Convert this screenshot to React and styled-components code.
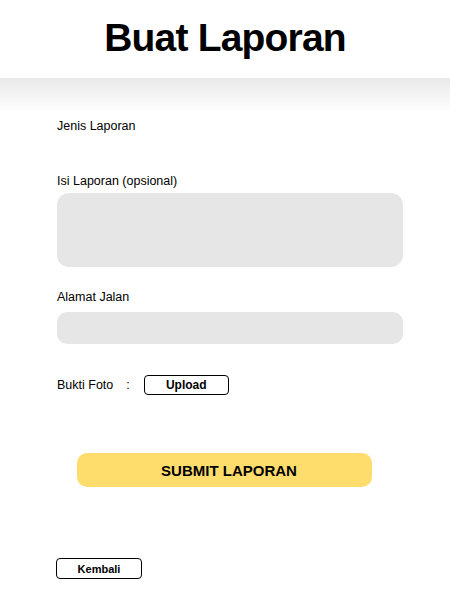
import styled, { createGlobalStyle } from "styled-components";

const GlobalStyle = createGlobalStyle`
    body {
        margin: 0;
        background: #fff;
        font-family: "Liberation Sans", Arial, sans-serif;
        color: #000;
    }
`

// judul halaman dengan bayangan tipis di bawahnya
const Header = styled.header`
    position: relative;
    height: 78px;
    display: flex;
    align-items: center;
    justify-content: center;
    background: #fff;
    &::after {
        content: "";
        position: absolute;
        left: 0;
        right: 0;
        top: 100%;
        height: 34px;
        background: linear-gradient(to bottom, #e9e9e9, rgba(255, 255, 255, 0));
    }
`

const Title = styled.h1`
    margin: 0;
    font-size: 39px;
    font-weight: 700;
    letter-spacing: -0.8px;
    transform: translateY(-1px);
`

const Form = styled.form`
    padding: 41px 47px 0 57px;
`

const Field = styled.div`
    display: flex;
    flex-direction: column;
    gap: ${({ gap }) => gap || 0}px;
    margin-bottom: ${({ space }) => space || 0}px;
`

const Label = styled.label`
    font-size: 12.5px;
    line-height: 15px;
`

const TextArea = styled.textarea`
    height: 74px;
    border: none;
    outline: none;
    resize: none;
    border-radius: 12px;
    background: #e6e6e6;
    font-family: inherit;
    padding: 8px 12px;
    box-sizing: border-box;
`

const Input = styled.input`
    height: 32px;
    border: none;
    outline: none;
    border-radius: 10px;
    background: #e6e6e6;
    font-family: inherit;
    padding: 0 12px;
    box-sizing: border-box;
`

const PhotoRow = styled.div`
    display: flex;
    align-items: center;
    font-size: 12.5px;
`

const Colon = styled.span`
    margin: 0 14px 0 13px;
`

const OutlineButton = styled.button`
    width: ${({ w }) => w}px;
    height: ${({ h }) => h || 20}px;
    padding: 0;
    border: 1px solid #000;
    border-radius: 4px;
    background: #fff;
    font-family: inherit;
    font-weight: 700;
    font-size: ${({ size }) => size}px;
    color: #000;
`

const SubmitButton = styled.button`
    display: block;
    width: 295px;
    height: 34px;
    margin: 58px 0 0 20px;
    padding: 0 0 0 9px;
    border: none;
    border-radius: 10px;
    background: #ffdd6d;
    font-family: inherit;
    font-weight: 700;
    font-size: 15px;
    color: #000;
`

const Footer = styled.div`
    margin-top: 71px;
    margin-left: -1px;
`

const App = () => {
    return (
        <>
            <GlobalStyle />
            <Header>
                <Title>Buat Laporan</Title>
            </Header>
            <Form onSubmit={e => e.preventDefault()}>
                <Field space={40}>
                    <Label>Jenis Laporan</Label>
                </Field>
                <Field gap={4} space={23}>
                    <Label>Isi Laporan (opsional)</Label>
                    <TextArea />
                </Field>
                <Field gap={7} space={31}>
                    <Label>Alamat Jalan</Label>
                    <Input />
                </Field>
                <PhotoRow>
                    Bukti Foto<Colon>:</Colon>
                    <OutlineButton type="button" w={85} size={12}>Upload</OutlineButton>
                </PhotoRow>
                <SubmitButton type="submit">SUBMIT LAPORAN</SubmitButton>
                <Footer>
                    <OutlineButton type="button" w={86} h={21} size={11}>Kembali</OutlineButton>
                </Footer>
            </Form>
        </>
    );
};

export default App;
